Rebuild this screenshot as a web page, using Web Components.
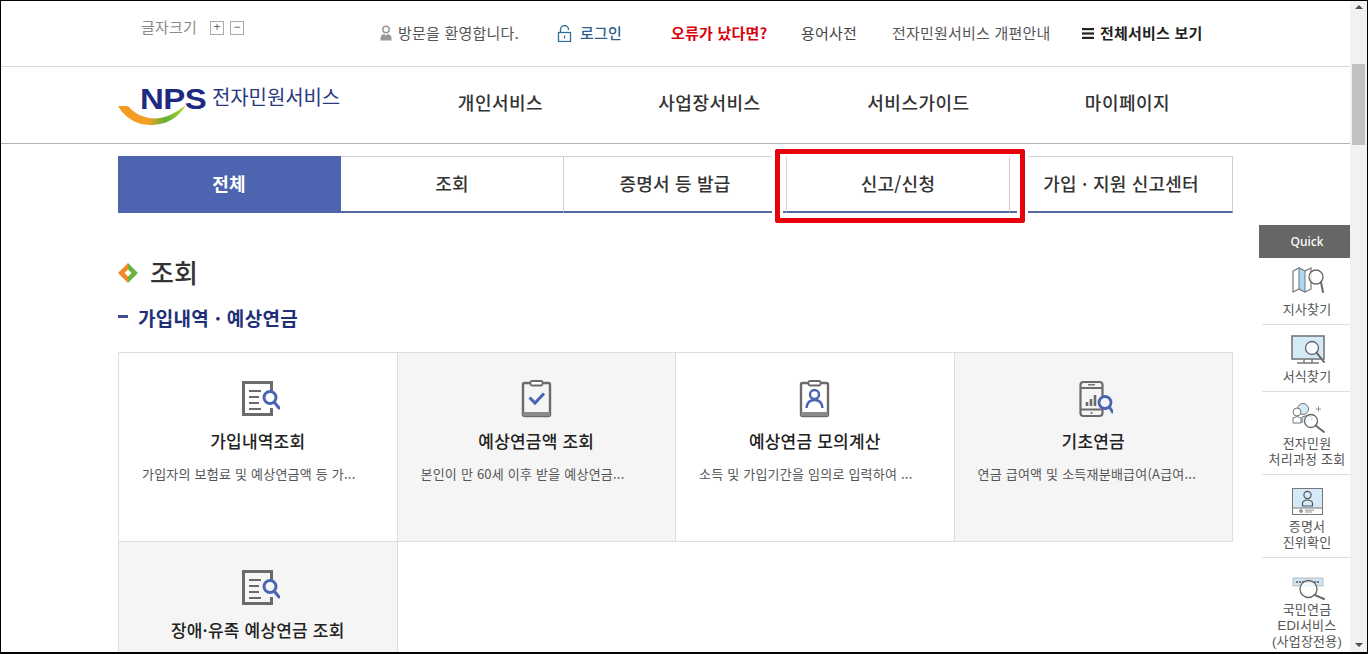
<!DOCTYPE html>
<html lang="ko">
<head>
<meta charset="utf-8">
<title>NPS 전자민원서비스</title>
<style>
  html, body { margin: 0; padding: 0; background: #fff; overflow: hidden; }
  body { font-family: "Noto Sans CJK KR", "Noto Sans", sans-serif; color: #333; }
</style>
</head>
<body>
<nps-frame>
  <nps-topbar></nps-topbar>
  <nps-mainnav></nps-mainnav>
  <nps-tabs></nps-tabs>
  <nps-heading title="조회" sub="가입내역 · 예상연금"></nps-heading>
  <nps-grid>
    <nps-card icon="doc" title="가입내역조회" desc="가입자의 보험료 및 예상연금액 등 가..."></nps-card>
    <nps-card icon="check" shade title="예상연금액 조회" desc="본인이 만 60세 이후 받을 예상연금..."></nps-card>
    <nps-card icon="person" title="예상연금 모의계산" desc="소득 및 가입기간을 임의로 입력하여 ..."></nps-card>
    <nps-card icon="phone" shade title="기초연금" desc="연금 급여액 및 소득재분배급여(A급여..."></nps-card>
    <nps-card icon="doc" shade title="장애·유족 예상연금 조회" desc=""></nps-card>
  </nps-grid>
</nps-frame>

<script>
/* helper: open shadow root from a html string */
function shadowOf(el, html) {
    const root = el.attachShadow({ mode: 'open' });
    const template = document.createElement('template');
    template.innerHTML = html;
    root.appendChild(template.content.cloneNode(true));
    return root;
}

/* window frame: black outline, scrollbar, floating quick menu and red marker */
class NpsFrame extends HTMLElement {
    constructor() {
        super();
        shadowOf(this, `
            <style>
                :host { display: block; position: relative; width: 1368px; height: 654px; box-sizing: border-box; overflow: hidden; }
                .body { display: flex; height: 654px; }
                .page { width: 1350px; height: 654px; overflow: hidden; flex: none; }
                .outline { position: absolute; inset: 0; border: 1px solid #000; border-bottom-width: 2px; pointer-events: none; }
                .marker { position: absolute; left: 775px; top: 149px; width: 250px; height: 74px; box-sizing: border-box;
                          border: 5px solid #e8000b; border-radius: 2px;
                          box-shadow: 0 0 0 3px #fff, inset 0 0 0 3px #fff; }
                nps-quick { position: absolute; left: 1259px; top: 225px; }
            </style>
            <div class="body">
                <div class="page"><slot></slot></div>
                <nps-scrollbar></nps-scrollbar>
            </div>
            <div class="marker"></div>
            <nps-quick></nps-quick>
            <div class="outline"></div>
        `);
    }
}
customElements.define('nps-frame', NpsFrame);

/* scrollbar on the right */
class NpsScrollbar extends HTMLElement {
    constructor() {
        super();
        shadowOf(this, `
            <style>
                :host { display: flex; flex-direction: column; align-items: center; width: 17px; height: 654px; background: #f1f1f1; flex: none; }
                .up, .down { width: 0; height: 0; border-left: 4px solid transparent; border-right: 4px solid transparent; }
                .up { border-bottom: 4px solid #505050; margin-top: 5px; }
                .thumb { width: 13px; height: 81px; background: #c1c1c1; margin-top: 55px; }
                .down { border-top: 4px solid #505050; margin-top: auto; margin-bottom: 7px; }
            </style>
            <div class="up"></div>
            <div class="thumb"></div>
            <div class="down"></div>
        `);
    }
}
customElements.define('nps-scrollbar', NpsScrollbar);

/* utility links above the main menu */
class NpsTopbar extends HTMLElement {
    constructor() {
        super();
        shadowOf(this, `
            <style>
                :host { display: block; height: 66px; border-bottom: 1px solid #d9d9d9; box-sizing: content-box; font-size: 15px; letter-spacing: 0.2px; }
                .row { display: flex; align-items: flex-start; padding-left: 141px; height: 66px; }
                .size { display: flex; align-items: center; height: 18px; margin-top: 18px; color: #8a8a8a; line-height: 18px; }
                .size b { box-sizing: border-box; width: 14px; height: 14px; margin-top: 2px; border: 1px solid #aaa; color: #666; font: 12px/11px "Liberation Sans", sans-serif; text-align: center; }
                .size b:first-of-type { margin-left: 13px; margin-right: 6px; }
                .links { display: flex; align-items: center; height: 20px; margin-top: 23px; line-height: 20px; color: #555; white-space: nowrap; }
                .hello { margin-left: 136px; display: flex; align-items: center; gap: 6px; width: 156px; }
                .login { margin-left: 21px; display: flex; align-items: center; gap: 8px; color: #2f5f8f; font-weight: 500; width: 114px; }
                .err { color: #d9000d; font-weight: 700; width: 130px; }
                .word { width: 91px; color: #444; }
                .guide { width: 190px; color: #555; }
                .all { display: flex; align-items: center; gap: 6px; color: #222; font-weight: 700; }
            </style>
            <div class="row">
                <div class="size">글자크기<b>+</b><b>−</b></div>
                <div class="links">
                    <span class="hello">
                        <svg width="12" height="16" viewBox="0 0 12 16"><circle cx="6" cy="4.5" r="3.2" fill="none" stroke="#999" stroke-width="1.5"/><path d="M0.5 15.5 V12.5 Q1 9.5 4 9 L6 10.5 L8 9 Q11 9.5 11.5 12.5 V15.5 Z" fill="#999"/></svg>
                        방문을 환영합니다.
                    </span>
                    <span class="login">
                        <svg width="15" height="17" viewBox="0 0 15 17" fill="none" stroke="#2f6f96" stroke-width="1.3"><rect x="1.5" y="7.5" width="12" height="9"/><path d="M3.5 7.5 V4.5 A4 4 0 0 1 11.5 4.5 V5"/><path d="M7.5 10.5 V13.5"/></svg>
                        로그인
                    </span>
                    <span class="err">오류가 났다면?</span>
                    <span class="word">용어사전</span>
                    <span class="guide">전자민원서비스 개편안내</span>
                    <span class="all">
                        <svg width="12" height="11" viewBox="0 0 12 11" fill="#222"><rect y="0" width="12" height="2.2"/><rect y="4.4" width="12" height="2.2"/><rect y="8.8" width="12" height="2.2"/></svg>
                        전체서비스 보기
                    </span>
                </div>
            </div>
        `);
    }
}
customElements.define('nps-topbar', NpsTopbar);

/* logo and four main menu items */
class NpsMainnav extends HTMLElement {
    constructor() {
        super();
        shadowOf(this, `
            <style>
                :host { display: flex; height: 76px; border-bottom: 1px solid #b4b4b4; padding-left: 118px; }
                .logo { position: relative; width: 222px; height: 76px; flex: none; white-space: nowrap; }
                .logo svg { position: absolute; left: 0; top: 0; }
                .nps { position: absolute; left: 22px; top: 14px; font: 700 30px/36px "Liberation Sans", sans-serif; letter-spacing: -0.5px; color: #1d2a80; transform: scaleX(1.1); transform-origin: left; }
                .txt { position: absolute; left: 94px; top: 15px; font-size: 20px; line-height: 30px; letter-spacing: -0.1px; color: #2b3a80; }
                nav { display: grid; grid-template-columns: repeat(4, 209px); margin-left: 56px; }
                a { display: flex; align-items: center; justify-content: center; font-size: 18px; color: #333; font-weight: 500; letter-spacing: 0.5px; padding-bottom: 6px; }
            </style>
            <div class="logo">
                <svg width="80" height="76" viewBox="0 0 80 76">
                    <defs><linearGradient id="sw" x1="0" x2="1" y1="0" y2="0">
                        <stop offset="0" stop-color="#f39a1e"/><stop offset=".45" stop-color="#f2a024"/><stop offset=".7" stop-color="#5fb335"/><stop offset="1" stop-color="#b9d62f"/>
                    </linearGradient></defs>
                    <path d="M0 39 H10 C20 51 37 55 52 48 C58 45 63 42 68 38 C62 48 52 58 32 58 C17 58 6 49 0 39 Z" fill="url(#sw)"/>
                </svg>
                <span class="nps">NPS</span>
                <span class="txt">전자민원서비스</span>
            </div>
            <nav>
                <a>개인서비스</a><a>사업장서비스</a><a>서비스가이드</a><a>마이페이지</a>
            </nav>
        `);
    }
}
customElements.define('nps-mainnav', NpsMainnav);

/* category tabs */
class NpsTabs extends HTMLElement {
    constructor() {
        super();
        const labels = ['전체', '조회', '증명서 등 발급', '신고/신청', '가입 · 지원 신고센터'];
        shadowOf(this, `
            <style>
                :host { display: grid; grid-template-columns: repeat(5, 1fr); width: 1115px; margin: 12px 0 0 118px; height: 57px; box-sizing: border-box; }
                div { display: flex; align-items: center; justify-content: center; box-sizing: border-box; height: 57px;
                      border: 1px solid #cfcfcf; border-left: 0; border-bottom: 2px solid #5468a0;
                      font-size: 18px; letter-spacing: 0.2px; font-weight: 500; color: #333; padding-bottom: 2px; }
                div:first-of-type { background: #4d64b0; color: #fff; font-weight: 700; border-color: #4d64b0; }
            </style>
            ${labels.map(t => `<div>${t}</div>`).join('')}
        `);
    }
}
customElements.define('nps-tabs', NpsTabs);

/* section title + sub title */
class NpsHeading extends HTMLElement {
    constructor() {
        super();
        shadowOf(this, `
            <style>
                :host { display: block; margin: 0 0 0 118px; padding-top: 37px; height: 102px; box-sizing: content-box; }
                .h { display: flex; align-items: center; gap: 12px; height: 42px; font-size: 26px; font-weight: 500; color: #333; }
                .h svg { margin-top: 4px; }
                .s { display: flex; align-items: center; gap: 10px; height: 30px; margin-top: 10px; font-size: 19px; font-weight: 700; color: #1f2f78; letter-spacing: 0.3px; }
                .s i { width: 10px; height: 3px; background: #3f4f90; margin-top: -2px; }
            </style>
            <div class="h">
                <svg width="20" height="20" viewBox="0 0 20 20">
                    <path d="M10 0 L20 10 L10 20 Z" fill="#6db33f"/><path d="M10 0 L0 10 L10 20 Z" fill="#f08a24"/><path d="M10 6.5 L13.5 10 L10 13.5 L6.5 10 Z" fill="#fff"/>
                </svg>
                <span></span>
            </div>
            <div class="s"><i></i><span></span></div>
        `);
        this.shadowRoot.querySelector('.h span').textContent = this.getAttribute('title');
        this.shadowRoot.querySelector('.s span').textContent = this.getAttribute('sub');
    }
}
customElements.define('nps-heading', NpsHeading);

/* card grid */
class NpsGrid extends HTMLElement {
    constructor() {
        super();
        shadowOf(this, `
            <style>
                :host { display: grid; grid-template-columns: repeat(4, 1fr); width: 1115px; margin-left: 118px; box-sizing: border-box;
                        border-top: 1px solid #ddd; border-left: 1px solid #ddd; }
            </style>
            <slot></slot>
        `);
    }
}
customElements.define('nps-grid', NpsGrid);

/* doc outline leaves a gap where the magnifier sits */
const docIcon = `
    <path d="M29.5 11 V2.5 H1.5 V34.5 H29.5 V28" fill="none" stroke="#6b6b6b" stroke-width="3"/>
    <path d="M7 11 H19 M7 17 H17 M7 23 H17 M7 29 H19" stroke="#6b6b6b" stroke-width="2.2"/>
    <circle cx="28" cy="17.5" r="6" fill="none" stroke="#4a64b4" stroke-width="3"/>
    <path d="M32.5 22.5 L37 28" stroke="#4a64b4" stroke-width="3" stroke-linecap="round"/>`;
const clipIcon = `
    <rect x="2" y="3" width="27" height="33" rx="1.5" fill="none" stroke="#6b6b6b" stroke-width="2.4"/>
    <path d="M2 32 H29 V36 H2 Z" fill="#8a8a8a"/>
    <rect x="9.5" y="1" width="12" height="4.5" rx="1.5" fill="#fff" stroke="#6b6b6b" stroke-width="1.8"/>`;
const icons = {
    doc: docIcon,
    check: clipIcon + `<path d="M8.5 17.5 L14 23 L23 13.5" fill="none" stroke="#4a64b4" stroke-width="3"/>`,
    person: clipIcon + `<circle cx="15.5" cy="14.5" r="4.5" fill="none" stroke="#4a64b4" stroke-width="2.4"/><path d="M7.5 28 C8 22 11 20 15.5 20 C20 20 23 22 23.5 28" fill="none" stroke="#4a64b4" stroke-width="2.4"/>`,
    phone: `
        <rect x="1.5" y="2" width="22" height="34" rx="3" fill="#f5f5f5" stroke="#6b6b6b" stroke-width="2.2"/>
        <path d="M2 8 H23 M2 29.5 H23" stroke="#6b6b6b" stroke-width="1.8"/>
        <path d="M9 4.8 H16" stroke="#6b6b6b" stroke-width="1.4"/><circle cx="12.5" cy="33" r="1.1" fill="#6b6b6b"/>
        <path d="M8 22 V26 M12 19 V26 M16 15 V26" stroke="#6b6b6b" stroke-width="2.6"/>
        <circle cx="26" cy="22.5" r="6" fill="#f5f5f5" stroke="#4a64b4" stroke-width="2.8"/>
        <path d="M30.5 27 L33.5 32" stroke="#4a64b4" stroke-width="2.8" stroke-linecap="round"/>`
};
/* width, height, shift from the card centre */
const iconBox = { doc: [38, 38, 7], check: [31, 38, 0], person: [31, 38, 0], phone: [34, 38, 6] };

/* service card */
class NpsCard extends HTMLElement {
    constructor() {
        super();
        const name = this.getAttribute('icon');
        const [w, h, shift] = iconBox[name];
        shadowOf(this, `
            <style>
                :host { display: flex; flex-direction: column; align-items: center; height: 189px; box-sizing: border-box;
                        border-right: 1px solid #ddd; border-bottom: 1px solid #ddd; padding-top: 27px; background: #fff; }
                :host([shade]) { background: #f5f5f5; }
                .i { height: 38px; display: flex; align-items: center; margin-left: ${shift}px; }
                .t { margin-top: 11px; font-size: 17px; line-height: 24px; font-weight: 500; color: #222; letter-spacing: 0.2px; white-space: nowrap; }
                .d { align-self: stretch; padding-left: 23px; margin-top: 11px; font-size: 13px; line-height: 20px; color: #555; letter-spacing: 0.22px; white-space: nowrap; }
            </style>
            <div class="i"><svg width="${w}" height="${h}" viewBox="0 0 ${w} ${h}">${icons[name]}</svg></div>
            <div class="t"></div>
            <div class="d"></div>
        `);
        this.shadowRoot.querySelector('.t').textContent = this.getAttribute('title');
        this.shadowRoot.querySelector('.d').textContent = this.getAttribute('desc');
    }
}
customElements.define('nps-card', NpsCard);

const mag = (x, y, r, x2, y2) => `
    <circle cx="${x}" cy="${y}" r="${r}" fill="#fff" fill-opacity=".75" stroke="#666" stroke-width="1.3"/>
    <path d="M${x + r * 0.7} ${y + r * 0.7} L${x2} ${y2}" stroke="#666" stroke-width="2" stroke-linecap="round"/>`;

/* floating quick menu items, icons live in a 50x38 box */
const quickItems = [
    { text: ['지사찾기'], svg: `
        <path d="M13 6 L19 3 L25 6 L31 3 V24 L25 27 L19 24 L13 27 Z" fill="#fff" stroke="#777" stroke-width="1.2"/>
        <path d="M19 3 L25 6 V27 L19 24 Z" fill="#a9d8f2" stroke="#777" stroke-width="1"/>
        ${mag(36, 12, 7, 43, 27)}` },
    { text: ['서식찾기'], svg: `
        <rect x="12" y="4" width="32" height="23" fill="#d4eaf7" stroke="#777" stroke-width="1.6"/>
        <path d="M17 31 H39 M24 27 V31 M32 27 V31" stroke="#777" stroke-width="1.4"/>
        ${mag(32, 16, 6.5, 44, 30)}` },
    { text: ['전자민원', '처리과정 조회'], svg: `
        <circle cx="23" cy="10" r="5.5" fill="#d4eaf7" stroke="#777"/><circle cx="17" cy="13" r="4" fill="#fff" stroke="#777"/>
        <path d="M13 24 V19 Q17 16 21 19 V24 Z" fill="#fff" stroke="#777"/><path d="M22 24 V18 Q27 15 32 18 V22" fill="#d4eaf7" stroke="#777"/>
        <path d="M36 10 H41 M38.5 7.5 V12.5" stroke="#888" stroke-width=".9"/>
        ${mag(31, 22, 6.5, 44, 33)}` },
    { text: ['증명서', '진위확인'], svg: `
        <rect x="12.5" y="6.5" width="30" height="26" fill="#d4eaf7" stroke="#777"/>
        <rect x="13" y="26" width="29" height="6" fill="#fff"/><path d="M12.5 26 H42.5" stroke="#777"/>
        <circle cx="27.5" cy="13" r="3.6" fill="none" stroke="#555" stroke-width="1.2"/><path d="M22.5 24 V21 Q23 18 27.5 18 Q32 18 32.5 21 V24 Z" fill="none" stroke="#555" stroke-width="1.2"/>
        <circle cx="21" cy="29" r="1.3" fill="none" stroke="#555"/><path d="M25 28.2 H34 M25 30 H32" stroke="#777" stroke-width=".8"/>` },
    { text: ['국민연금', 'EDI서비스', '(사업장전용)'], svg: `
        <rect x="13" y="13" width="30" height="8" fill="#cfe5f3" stroke="#999" stroke-width=".6"/>
        <path d="M16 17 H40" stroke="#777" stroke-width="2" stroke-dasharray="2 1"/>
        ${mag(28.5, 24, 8.5, 44, 34)}` }
];

class NpsQuick extends HTMLElement {
    constructor() {
        super();
        shadowOf(this, `
            <style>
                :host { display: block; width: 91px; background: #fff; font-size: 13px; color: #555; }
                .head { height: 33px; background: #666; color: #fff; text-align: center; padding-left: 5px; font: 500 12px/33px "Noto Sans", sans-serif; }
                .item { display: flex; flex-direction: column; align-items: center; padding: 7px 0 5px 2px; margin: 0 0 0 3px; border-bottom: 1px solid #ddd; }
                .item:last-child { border-bottom: 0; }
                svg { display: block; margin-right: 5px; margin-bottom: -1px; }
                span { font-family: "Liberation Sans", "Noto Sans CJK KR", sans-serif; line-height: 16px; white-space: nowrap; letter-spacing: 0.2px; }
                span:last-child { margin-bottom: 1px; }
            </style>
            <div class="head">Quick</div>
            ${quickItems.map(q => `
                <div class="item">
                    <svg width="50" height="38" viewBox="0 0 50 38">${q.svg}</svg>
                    ${q.text.map(t => `<span>${t}</span>`).join('')}
                </div>`).join('')}
        `);
    }
}
customElements.define('nps-quick', NpsQuick);
</script>
</body>
</html>
